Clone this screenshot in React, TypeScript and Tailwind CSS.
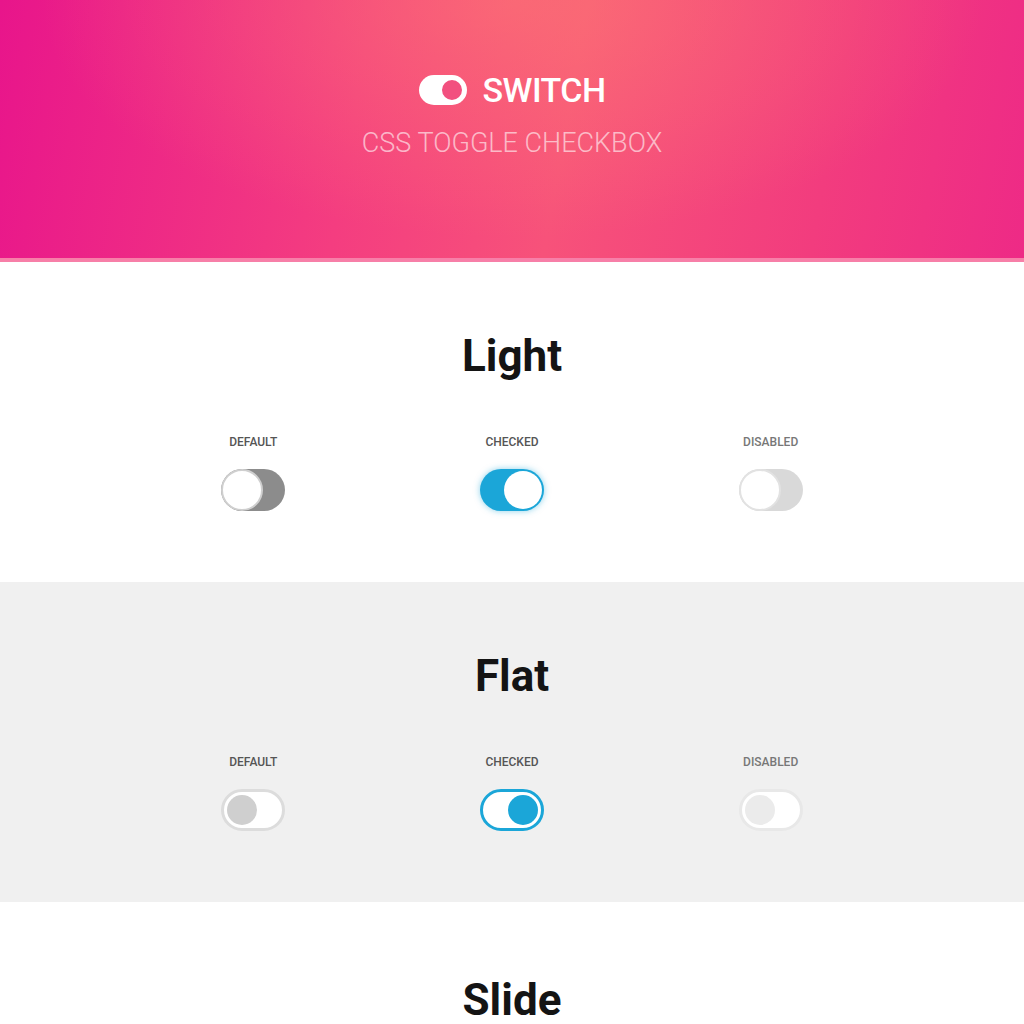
import React from 'react';

type Variant = 'light' | 'flat';
type State = 'default' | 'checked' | 'disabled';

function Toggle({ variant, state }: { variant: Variant; state: State }) {
  if (variant === 'light') {
    if (state === 'checked') {
      return (
        <div className="relative h-[42px] w-[64px] rounded-full bg-[#1ba6d8] shadow-[0_0_6px_rgba(27,166,216,0.5)]">
          <div className="absolute right-[2px] top-[2px] h-[38px] w-[38px] rounded-full bg-white" />
        </div>
      );
    }
    const track = state === 'disabled' ? 'bg-[#d9d9d9]' : 'bg-[#8c8c8c]';
    const ring = state === 'disabled' ? 'border-[#e2e2e2]' : 'border-[#cfcfcf]';
    return (
      <div className={`relative h-[42px] w-[64px] rounded-full ${track}`}>
        <div className={`absolute left-0 top-0 h-[42px] w-[42px] rounded-full border-2 bg-white ${ring}`} />
      </div>
    );
  }

  // flat
  if (state === 'checked') {
    return (
      <div className="relative h-[42px] w-[64px] rounded-full border-[3px] border-[#1ba6d8] bg-white">
        <div className="absolute right-[3px] top-[3px] h-[30px] w-[30px] rounded-full bg-[#1ba6d8]" />
      </div>
    );
  }
  const faded = state === 'disabled';
  return (
    <div
      className={`relative h-[42px] w-[64px] rounded-full border-[3px] bg-white ${
        faded ? 'border-[#e8e8e8]' : 'border-[#dcdcdc]'
      }`}
    >
      <div
        className={`absolute left-[3px] top-[3px] h-[30px] w-[30px] rounded-full ${
          faded ? 'bg-[#ebebeb]' : 'bg-[#cfcfcf]'
        }`}
      />
    </div>
  );
}

function Section({ title, variant, bg }: { title: string; variant: Variant; bg: string }) {
  const items: { label: string; state: State }[] = [
    { label: 'DEFAULT', state: 'default' },
    { label: 'CHECKED', state: 'checked' },
    { label: 'DISABLED', state: 'disabled' },
  ];
  return (
    <section className={`h-[320px] pt-[66px] ${bg}`}>
      <h2 className="text-center text-[44px] font-bold leading-[56px] text-[#141414]">{title}</h2>
      <div className="mt-[50px] grid grid-cols-3 px-[124px]">
        {items.map((it) => (
          <div key={it.label} className="flex flex-col items-center">
            <span
              className={`text-[12px] font-medium leading-[16px] ${
                it.state === 'disabled' ? 'text-[#777]' : 'text-[#555]'
              }`}
            >
              {it.label}
            </span>
            <div className="mt-[19px]">
              <Toggle variant={variant} state={it.state} />
            </div>
          </div>
        ))}
      </div>
    </section>
  );
}

export default function App() {
  return (
    <div className="min-h-screen bg-white font-['Roboto',sans-serif]">
      {/* Header */}
      <header className="relative h-[258px] overflow-hidden bg-[linear-gradient(100deg,#e8158b_0%,#f43d80_35%,#f7527a_55%,#f23c7e_80%,#ee2a86_100%)]">
        <div className="absolute inset-0 bg-[radial-gradient(ellipse_at_50%_0%,rgba(255,140,110,0.45),transparent_65%)]" />
        <div className="relative flex flex-col items-center pt-[70px]">
          <div className="flex items-center gap-[14px]">
            <svg width="50" height="32" viewBox="0 0 50 32">
              <rect x="1" y="1" width="48" height="30" rx="15" fill="#fff" />
              <circle cx="34" cy="16" r="11" fill="#f2507f" stroke="#fff" strokeWidth="2" />
            </svg>
            <span className="text-[34px] font-medium leading-[40px] tracking-[-0.5px] text-white">SWITCH</span>
          </div>
          <span className="mt-[16px] text-[27px] font-light leading-[34px] text-white/60">
            CSS TOGGLE CHECKBOX
          </span>
        </div>
      </header>
      <div className="h-[4px] bg-[#f77fa8]" />

      <Section title="Light" variant="light" bg="bg-white" />
      <Section title="Flat" variant="flat" bg="bg-[#f0f0f0]" />

      <section className="pt-[70px]">
        <h2 className="text-center text-[44px] font-bold leading-[56px] text-[#141414]">Slide</h2>
      </section>
    </div>
  );
}
